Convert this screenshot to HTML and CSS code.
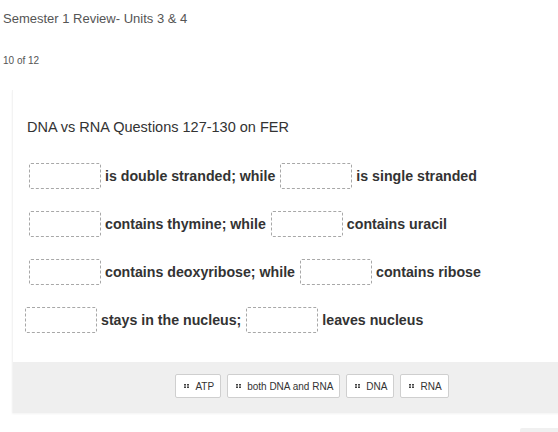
FILE: index.html
```html
<!DOCTYPE html>
<html>
<head>
<meta charset="utf-8">
<link rel="stylesheet" href="styles.css">
</head>
<body>
<div class="page">
  <div class="title">Semester 1 Review- Units 3 &amp; 4</div>
  <div class="counter">10 of 12</div>
  <div class="card">
    <div class="content">
      <div class="heading">DNA vs RNA Questions 127-130 on FER</div>
      <div class="row"><span class="slot"></span><span class="txt">is double stranded; while</span><span class="slot"></span><span class="txt">is single stranded</span></div>
      <div class="row"><span class="slot"></span><span class="txt">contains thymine; while</span><span class="slot"></span><span class="txt">contains uracil</span></div>
      <div class="row"><span class="slot"></span><span class="txt">contains deoxyribose; while</span><span class="slot"></span><span class="txt">contains ribose</span></div>
      <div class="row row-shift"><span class="slot"></span><span class="txt">stays in the nucleus;</span><span class="slot"></span><span class="txt">leaves nucleus</span></div>
    </div>
    <div class="bank">
      <div class="chip"><svg class="grip" width="5" height="4" viewBox="0 0 5 4"><rect x="0" y="0" width="2" height="1.6"/><rect x="3" y="0" width="2" height="1.6"/><rect x="0" y="2.4" width="2" height="1.6"/><rect x="3" y="2.4" width="2" height="1.6"/></svg><span>ATP</span></div>
      <div class="chip"><svg class="grip" width="5" height="4" viewBox="0 0 5 4"><rect x="0" y="0" width="2" height="1.6"/><rect x="3" y="0" width="2" height="1.6"/><rect x="0" y="2.4" width="2" height="1.6"/><rect x="3" y="2.4" width="2" height="1.6"/></svg><span>both DNA and RNA</span></div>
      <div class="chip"><svg class="grip" width="5" height="4" viewBox="0 0 5 4"><rect x="0" y="0" width="2" height="1.6"/><rect x="3" y="0" width="2" height="1.6"/><rect x="0" y="2.4" width="2" height="1.6"/><rect x="3" y="2.4" width="2" height="1.6"/></svg><span>DNA</span></div>
      <div class="chip"><svg class="grip" width="5" height="4" viewBox="0 0 5 4"><rect x="0" y="0" width="2" height="1.6"/><rect x="3" y="0" width="2" height="1.6"/><rect x="0" y="2.4" width="2" height="1.6"/><rect x="3" y="2.4" width="2" height="1.6"/></svg><span>RNA</span></div>
    </div>
  </div>
  <div class="footer-btn"></div>
</div>
</body>
</html>
```
FILE: styles.css
```css
html, body {
  margin: 0;
  padding: 0;
  background: #fff;
  overflow: hidden;
}
body {
  width: 558px;
  height: 432px;
  font-family: "Liberation Sans", Arial, sans-serif;
}
.page {
  width: 700px;
}
.title {
  margin-top: 11px;
  padding-left: 3px;
  font-size: 13px;
  line-height: 16px;
  color: #555;
}
.counter {
  margin-top: 28px;
  padding-left: 3px;
  font-size: 10px;
  line-height: 12px;
  color: #555;
}
.card {
  margin-top: 23px;
  margin-left: 12px;
  width: 598px;
  border-left: 1px solid #f3f3f3;
  box-shadow: 0 1px 2px rgba(0,0,0,0.05);
}
.content {
  padding: 28px 0 29px 14px;
}
.heading {
  font-size: 14.5px;
  line-height: 18px;
  color: #333;
  margin-bottom: 27px;
}
.row {
  display: flex;
  align-items: center;
  gap: 4px;
  margin-left: 2px;
  height: 26px;
  margin-bottom: 22px;
}
.row:last-child {
  margin-bottom: 0;
}
.row-shift {
  margin-left: -2px;
}
.slot {
  width: 70px;
  height: 24px;
  border: 1px dashed #a8a8a8;
  border-radius: 2px;
  background: #fff;
}
.txt {
  font-size: 14.2px;
  font-weight: bold;
  color: #333;
  margin-right: 1px;
}
.bank {
  background: #efefef;
  height: 51px;
  padding-top: 12px;
  box-sizing: border-box;
  display: flex;
  justify-content: center;
  align-items: flex-start;
  gap: 6px;
}
.chip {
  display: flex;
  align-items: center;
  gap: 6px;
  height: 24px;
  box-sizing: border-box;
  padding: 0 6px 0 8px;
  background: #fff;
  border: 1px solid #cfcfcf;
  border-radius: 2px;
  font-size: 10px;
  color: #333;
}
.grip {
  fill: #444;
  display: block;
}
.footer-btn {
  margin-top: 15px;
  margin-left: 520px;
  width: 40px;
  height: 20px;
  background: #f0f0f0;
  border-radius: 2px;
}
```
